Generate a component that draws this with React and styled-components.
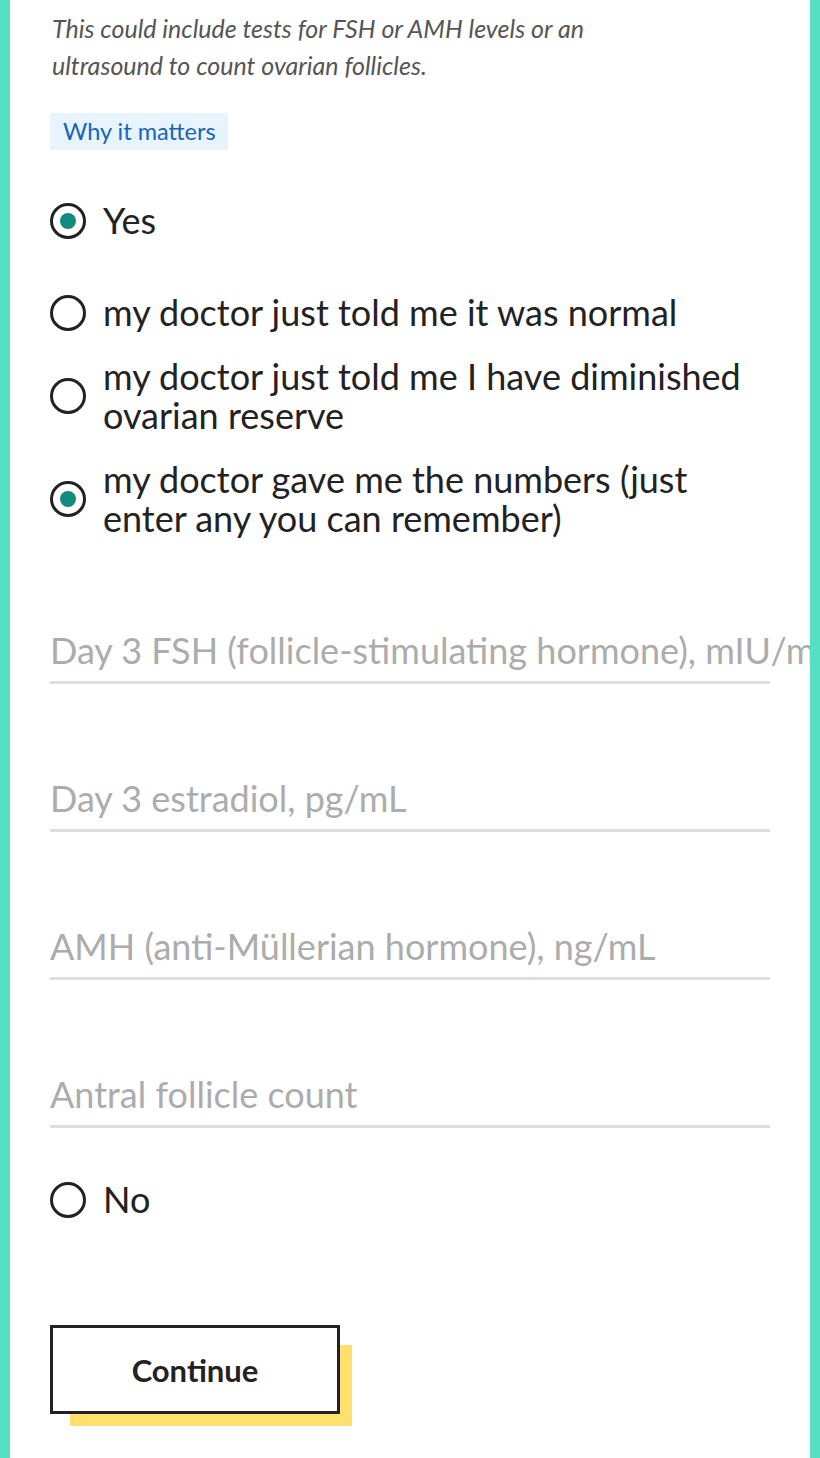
import React from "react";
import styled, { createGlobalStyle } from "styled-components";

const Global = createGlobalStyle`
  html, body { margin: 0; padding: 0; background: #fff; }
  * { box-sizing: border-box; }
`;

const Frame = styled.div`
  min-height: 1458px;
  border-left: 10px solid #56e0c3;
  border-right: 10px solid #56e0c3;
  overflow: hidden;
  padding: 10px 40px 30px 40px;
  font-family: Lato, "Noto Sans", sans-serif;
  color: #222;
`;

const Intro = styled.p`
  margin: 0 0 0 2px;
  font-style: italic;
  font-size: 25px;
  line-height: 37px;
  color: #555;
  max-width: 600px;
`;

const Tag = styled.span`
  display: inline-block;
  margin-top: 29px;
  height: 37px;
  line-height: 37px;
  padding: 0 12px 0 13px;
  background: #e7f3fd;
  color: #1766b5;
  font-size: 23.5px;
`;

const Options = styled.div`
  display: flex;
  flex-direction: column;
  gap: 25px;
  margin-top: 51px;
`;

const Option = styled.label`
  display: flex;
  align-items: center;
  gap: 17px;
  font-size: 36px;
  line-height: 39px;
  margin-bottom: ${(p) => (p.$extra ? "28px" : "0")};
`;

const Radio = styled.span`
  flex: 0 0 36px;
  width: 36px;
  height: 36px;
  border-radius: 50%;
  border: 3.5px solid #222;
  display: flex;
  align-items: center;
  justify-content: center;
  &::after {
    content: "";
    width: 16px;
    height: 16px;
    border-radius: 50%;
    background: #148a7c;
    display: ${(p) => (p.$checked ? "block" : "none")};
  }
`;

const Fields = styled.div`
  display: flex;
  flex-direction: column;
  gap: 83px;
  margin-top: 81px;
`;

const Field = styled.div`
  width: 720px;
  border-bottom: 3px solid #dedede;
`;

const Input = styled.input`
  display: block;
  width: 820px;
  height: 62px;
  border: none;
  outline: none;
  padding: 0;
  background: transparent;
  font-family: Lato, "Noto Sans", sans-serif;
  font-size: 36px;
  color: #222;
  &::placeholder { color: #acacac; opacity: 1; }
`;

const Spacer = styled.div`
  height: ${(p) => p.$h}px;
`;

const Button = styled.button`
  display: block;
  width: 290px;
  height: 89px;
  border: 3px solid #222;
  background: #fff;
  box-shadow: 16px 16px 0 -4px #ffdf6e;
  font-family: Lato, "Noto Sans", sans-serif;
  font-weight: 700;
  font-size: 31px;
  color: #222;
  padding: 0;
  cursor: pointer;
`;

export default function App() {
  return (
    <>
      <Global />
      <Frame>
        <Intro>
          This could include tests for FSH or AMH levels or an ultrasound to count ovarian follicles.
        </Intro>
        <Tag>Why it matters</Tag>
        <Options>
          <Option $extra>
            <Radio $checked />
            Yes
          </Option>
          <Option>
            <Radio />
            my doctor just told me it was normal
          </Option>
          <Option>
            <Radio />
            my doctor just told me I have diminished ovarian reserve
          </Option>
          <Option>
            <Radio $checked />
            my doctor gave me the numbers (just enter any you can remember)
          </Option>
        </Options>
        <Fields>
          <Field><Input placeholder="Day 3 FSH (follicle-stimulating hormone), mIU/mL" /></Field>
          <Field><Input placeholder="Day 3 estradiol, pg/mL" /></Field>
          <Field><Input placeholder="AMH (anti-Müllerian hormone), ng/mL" /></Field>
          <Field><Input placeholder="Antral follicle count" /></Field>
        </Fields>
        <Spacer $h={52} />
        <Option>
          <Radio />
          No
        </Option>
        <Spacer $h={106} />
        <Button>Continue</Button>
      </Frame>
    </>
  );
}
